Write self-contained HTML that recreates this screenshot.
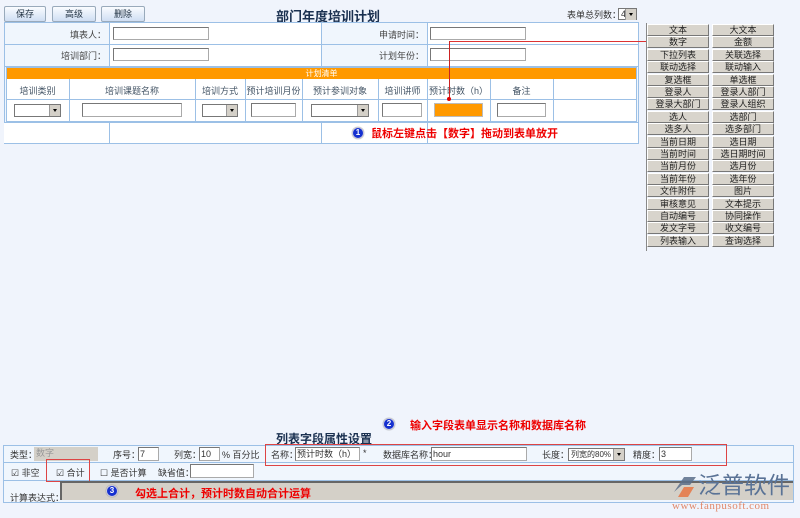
<!DOCTYPE html>
<html><head><meta charset="utf-8"><style>
*{margin:0;padding:0;box-sizing:border-box}
body{width:800px;height:518px;background:#f0f4fc;font-family:"Liberation Sans","Noto Sans CJK SC",sans-serif;font-size:9px;color:#333;position:relative;overflow:hidden}
.a{position:absolute;white-space:nowrap}
.btn{position:absolute;top:6px;height:16px;border:1px solid #9ab;border-radius:2px;background:linear-gradient(#fafcff,#cfdef3);text-align:center;line-height:14px;font-size:9px;color:#234}
.inp{position:absolute;background:#fff;border:1px solid #aaa;border-top-color:#777;border-left-color:#777;white-space:nowrap;overflow:hidden}
.sel{position:absolute;background:#fff;border:1px solid #777;height:13px;white-space:nowrap}
.sel:after{content:"";position:absolute;right:0;top:0;width:10px;height:11px;background:#d4d0c8;border-left:1px solid #999}
.sel i{position:absolute;right:3px;top:4px;border:2px solid transparent;border-top:3px solid #000;z-index:2}
.lb{position:absolute;text-align:right;font-size:9px;color:#444}
.hl{position:absolute;height:1px;background:#9cc0e6}
.vl{position:absolute;width:1px;background:#9cc0e6}
.g{position:absolute;width:62px;height:12px;background:#d8d4cc;border:1px solid #fff;border-right-color:#777;border-bottom-color:#777;text-align:center;font-size:9px;line-height:11px;color:#222}
.red{color:#e00;font-weight:bold;font-size:11px}
.num{position:absolute;width:12px;height:12px;border-radius:50%;background:#1530d0;border:1px solid #ccd;color:#fff;font-size:8px;font-weight:bold;text-align:center;line-height:10px;box-shadow:0 0 1px #666}
</style></head><body>
<div class="btn" style="left:4px;width:42px">保存</div>
<div class="btn" style="left:52px;width:44px">高级</div>
<div class="btn" style="left:101px;width:44px">删除</div>
<div class="a" style="left:276px;top:6px;font-size:13px;font-weight:bold;color:#1a3050">部门年度培训计划</div>
<div class="a" style="left:567px;top:8px">表单总列数：</div>
<div class="sel" style="left:618px;top:8px;width:19px;height:12px;font-size:9px;line-height:10px;padding-left:2px">4<i></i></div>

<div class="a" style="left:4px;top:22px;width:635px;height:122px;border:1px solid #9cc0e6;background:#f0f6fd"></div>
<div class="a" style="left:109px;top:23px;width:212px;height:43px;background:#fff"></div>
<div class="a" style="left:427px;top:23px;width:211px;height:43px;background:#fff"></div>
<div class="hl" style="left:4px;top:44px;width:635px"></div>
<div class="hl" style="left:4px;top:66px;width:635px"></div>
<div class="hl" style="left:4px;top:122px;width:635px"></div>
<div class="vl" style="left:109px;top:22px;height:44px"></div>
<div class="vl" style="left:321px;top:22px;height:44px"></div>
<div class="vl" style="left:427px;top:22px;height:44px"></div>
<div class="lb" style="left:4px;top:28px;width:102px">填表人：</div>
<div class="lb" style="left:4px;top:49px;width:102px">培训部门：</div>
<div class="lb" style="left:321px;top:28px;width:103px">申请时间：</div>
<div class="lb" style="left:321px;top:49px;width:103px">计划年份：</div>
<div class="inp" style="left:113px;top:27px;width:96px;height:13px"></div>
<div class="inp" style="left:113px;top:48px;width:96px;height:13px"></div>
<div class="inp" style="left:430px;top:27px;width:96px;height:13px"></div>
<div class="inp" style="left:430px;top:48px;width:96px;height:13px"></div>

<div class="a" style="left:6px;top:67px;width:631px;height:55px;border:1px solid #9cc0e6;background:#fff"></div>
<div class="a" style="left:7px;top:68px;width:629px;height:11px;background:#ff9900;color:#fff;text-align:center;font-size:8px;line-height:11px">计划清单</div>
<div class="hl" style="left:6px;top:99px;width:631px"></div>
<div class="vl" style="left:69px;top:79px;height:42px"></div>
<div class="vl" style="left:195px;top:79px;height:42px"></div>
<div class="vl" style="left:245px;top:79px;height:42px"></div>
<div class="vl" style="left:302px;top:79px;height:42px"></div>
<div class="vl" style="left:378px;top:79px;height:42px"></div>
<div class="vl" style="left:427px;top:79px;height:42px"></div>
<div class="vl" style="left:490px;top:79px;height:42px"></div>
<div class="vl" style="left:553px;top:79px;height:42px"></div>
<div class="a" style="left:6px;top:84px;width:63px;text-align:center;color:#456">培训类别</div>
<div class="a" style="left:69px;top:84px;width:126px;text-align:center;color:#456">培训课题名称</div>
<div class="a" style="left:195px;top:84px;width:50px;text-align:center;color:#456">培训方式</div>
<div class="a" style="left:245px;top:84px;width:57px;text-align:center;color:#456">预计培训月份</div>
<div class="a" style="left:302px;top:84px;width:76px;text-align:center;color:#456">预计参训对象</div>
<div class="a" style="left:378px;top:84px;width:49px;text-align:center;color:#456">培训讲师</div>
<div class="a" style="left:427px;top:84px;width:63px;text-align:center;color:#456">预计时数（h）</div>
<div class="a" style="left:490px;top:84px;width:63px;text-align:center;color:#456">备注</div>
<div class="sel" style="left:14px;top:104px;width:47px"><i></i></div>
<div class="inp" style="left:82px;top:103px;width:100px;height:14px"></div>
<div class="sel" style="left:202px;top:104px;width:36px"><i></i></div>
<div class="inp" style="left:251px;top:103px;width:45px;height:14px"></div>
<div class="sel" style="left:311px;top:104px;width:58px"><i></i></div>
<div class="inp" style="left:382px;top:103px;width:40px;height:14px"></div>
<div class="a" style="left:434px;top:103px;width:49px;height:14px;background:#ff9900;border:1px solid #bbb"></div>
<div class="inp" style="left:497px;top:103px;width:49px;height:14px"></div>
<div class="a" style="left:4px;top:123px;width:634px;height:20px;background:#fff"></div>
<div class="vl" style="left:109px;top:122px;height:21px"></div>
<div class="vl" style="left:321px;top:122px;height:21px"></div>
<div class="vl" style="left:427px;top:122px;height:21px"></div>
<div class="num" style="left:352px;top:127px">1</div>
<div class="a red" style="left:371px;top:125px">鼠标左键点击【数字】拖动到表单放开</div>

<div class="a" style="left:449px;top:41px;width:202px;height:1px;background:#d33"></div>
<div class="a" style="left:449px;top:41px;width:1px;height:58px;background:#c22"></div>
<div class="a" style="left:447px;top:97px;width:4px;height:4px;border-radius:50%;background:#d00"></div>
<div class="a" style="left:649px;top:40px;width:4px;height:4px;border-radius:50%;background:#d00"></div>

<div class="a" style="left:646px;top:23px;width:1px;height:228px;background:#888"></div>
<div class="g" style="left:647px;top:24px">文本</div><div class="g" style="left:712px;top:24px">大文本</div>
<div class="g" style="left:647px;top:36.4px">数字</div><div class="g" style="left:712px;top:36.4px">金额</div>
<div class="g" style="left:647px;top:48.8px">下拉列表</div><div class="g" style="left:712px;top:48.8px">关联选择</div>
<div class="g" style="left:647px;top:61.2px">联动选择</div><div class="g" style="left:712px;top:61.2px">联动输入</div>
<div class="g" style="left:647px;top:73.6px">复选框</div><div class="g" style="left:712px;top:73.6px">单选框</div>
<div class="g" style="left:647px;top:86px">登录人</div><div class="g" style="left:712px;top:86px">登录人部门</div>
<div class="g" style="left:647px;top:98.4px">登录大部门</div><div class="g" style="left:712px;top:98.4px">登录人组织</div>
<div class="g" style="left:647px;top:110.8px">选人</div><div class="g" style="left:712px;top:110.8px">选部门</div>
<div class="g" style="left:647px;top:123.2px">选多人</div><div class="g" style="left:712px;top:123.2px">选多部门</div>
<div class="g" style="left:647px;top:135.6px">当前日期</div><div class="g" style="left:712px;top:135.6px">选日期</div>
<div class="g" style="left:647px;top:148px">当前时间</div><div class="g" style="left:712px;top:148px">选日期时间</div>
<div class="g" style="left:647px;top:160.4px">当前月份</div><div class="g" style="left:712px;top:160.4px">选月份</div>
<div class="g" style="left:647px;top:172.8px">当前年份</div><div class="g" style="left:712px;top:172.8px">选年份</div>
<div class="g" style="left:647px;top:185.2px">文件附件</div><div class="g" style="left:712px;top:185.2px">图片</div>
<div class="g" style="left:647px;top:197.6px">审核意见</div><div class="g" style="left:712px;top:197.6px">文本提示</div>
<div class="g" style="left:647px;top:210px">自动编号</div><div class="g" style="left:712px;top:210px">协同操作</div>
<div class="g" style="left:647px;top:222.4px">发文字号</div><div class="g" style="left:712px;top:222.4px">收文编号</div>
<div class="g" style="left:647px;top:234.8px">列表输入</div><div class="g" style="left:712px;top:234.8px">查询选择</div>

<div class="num" style="left:383px;top:418px">2</div>
<div class="a red" style="left:410px;top:417px">输入字段表单显示名称和数据库名称</div>
<div class="a" style="left:276px;top:430px;font-size:12px;font-weight:bold;color:#1a3050">列表字段属性设置</div>
<div class="a" style="left:3px;top:445px;width:791px;height:58px;border:1px solid #9cc0e6;background:#f0f6fd"></div>
<div class="hl" style="left:3px;top:462px;width:791px"></div>
<div class="hl" style="left:3px;top:480px;width:791px"></div>
<div class="a" style="left:10px;top:448px">类型：</div>
<div class="a" style="left:34px;top:447px;width:64px;height:14px;background:#d4d0c8;color:#999;padding-left:2px;line-height:13px">数字</div>
<div class="a" style="left:113px;top:448px">序号：</div>
<div class="inp" style="left:138px;top:447px;width:21px;height:14px;padding-left:1px;line-height:12px">7</div>
<div class="a" style="left:174px;top:448px">列宽：</div>
<div class="inp" style="left:199px;top:447px;width:21px;height:14px;padding-left:1px;line-height:12px">10</div>
<div class="a" style="left:222px;top:448px">% 百分比</div>
<div class="a" style="left:271px;top:448px">名称：</div>
<div class="inp" style="left:295px;top:447px;width:65px;height:14px;padding-left:1px;line-height:12px">预计时数（h）</div>
<div class="a" style="left:363px;top:448px">*</div>
<div class="a" style="left:383px;top:448px">数据库名称：</div>
<div class="inp" style="left:431px;top:447px;width:96px;height:14px;padding-left:1px;line-height:12px">hour</div>
<div class="a" style="left:542px;top:448px">长度：</div>
<div class="sel" style="left:568px;top:448px;width:57px;font-size:8px;padding-left:2px;line-height:11px">列宽的80%<i></i></div>
<div class="a" style="left:633px;top:448px">精度：</div>
<div class="inp" style="left:659px;top:447px;width:33px;height:14px;padding-left:1px;line-height:12px">3</div>
<div class="a" style="left:265px;top:444px;width:462px;height:22px;border:1px solid #d44"></div>
<div class="a" style="left:11px;top:466px">☑ 非空</div>
<div class="a" style="left:56px;top:466px">☑ 合计</div>
<div class="a" style="left:46px;top:459px;width:44px;height:23px;border:1px solid #d44"></div>
<div class="a" style="left:100px;top:466px">☐ 是否计算</div>
<div class="a" style="left:158px;top:466px">缺省值：</div>
<div class="inp" style="left:190px;top:464px;width:64px;height:14px"></div>
<div class="a" style="left:10px;top:491px">计算表达式：</div>
<div class="a" style="left:60px;top:481px;width:733px;height:19px;background:#d4d0c8;border-top:2px solid #666;border-left:2px solid #666"></div>
<div class="num" style="left:106px;top:485px">3</div>
<div class="a red" style="left:135px;top:485px">勾选上合计，预计时数自动合计运算</div>

<svg class="a" style="left:670px;top:472px" width="30" height="28" viewBox="0 0 30 28"><path d="M4 20 L14 5 L26 5 L20 13 L12 13 Z" fill="#5a6f8a" opacity=".85"/><path d="M14 15 L24 15 L18 25 L8 25 Z" fill="#e67a4a" opacity=".9"/></svg>
<div class="a" style="left:698px;top:468px;font-size:23px;color:#5a7396;font-family:'Noto Sans CJK SC',sans-serif;line-height:30px">泛普软件</div>
<div class="a" style="left:672px;top:500px;font-size:11px;color:#e0886a;font-family:'Liberation Serif',serif;letter-spacing:0.5px">www.fanpusoft.com</div>
</body></html>
